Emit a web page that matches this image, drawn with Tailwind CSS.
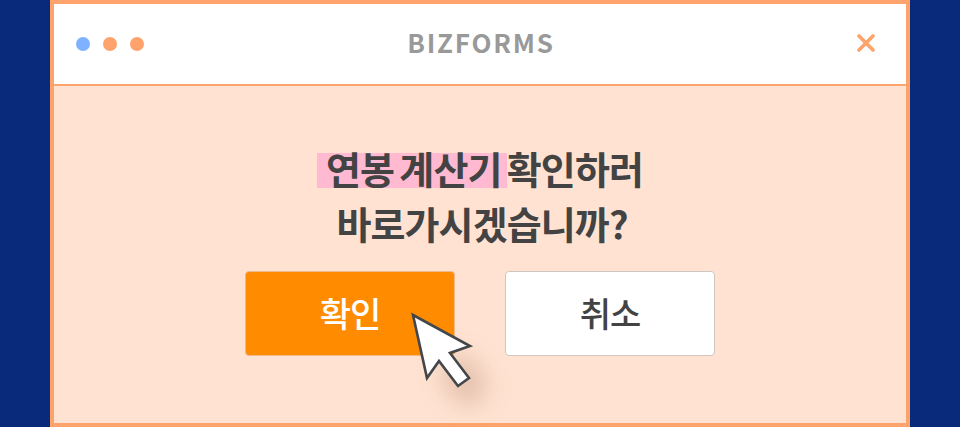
<!DOCTYPE html>
<html lang="ko">
<head>
  <meta charset="UTF-8">
  <title>BizForms</title>
  <meta name="viewport" content="width=device-width, initial-scale=1.0">
  <script src="https://cdn.jsdelivr.net/npm/@tailwindcss/browser@4"></script>
</head>
<body class="bg-[#09297a] h-[427px] overflow-hidden font-['Noto_Sans_CJK_KR','Noto_Sans',sans-serif]">
  <div class="relative mx-[50px] h-[427px] border-4 border-[#ffa36c] bg-[#ffe2d1] flex flex-col">
    <header class="h-[82px] shrink-0 bg-white border-b-2 border-[#ffa36c] flex items-center justify-between pl-[22px] pr-[31px]">
      <div class="flex gap-[13px] w-[70px]">
        <span class="w-[14px] h-[14px] rounded-full bg-[#7eb1ff]"></span>
        <span class="w-[14px] h-[14px] rounded-full bg-[#ffa36c]"></span>
        <span class="w-[14px] h-[14px] rounded-full bg-[#ffa36c]"></span>
      </div>
      <div class="flex-1 text-center pl-[11px] mb-[5px] text-[26px] leading-none font-bold tracking-[1.8px] text-[#999999]">BIZFORMS</div>
      <svg class="w-[18px] h-[18px] mb-[2px] ml-[52px]" viewBox="0 0 18 18" fill="none" stroke="#ffa36c" stroke-width="3.6" stroke-linecap="round"><path d="M2 2 16 16M16 2 2 16"/></svg>
    </header>
    <main class="flex-1 flex flex-col items-center pt-[54px]">
      <h1 class="text-[38px] leading-[55px] font-bold tracking-[-0.9px] [word-spacing:-4.5px] text-[#434343] text-center">
        <span class="bg-[linear-gradient(transparent_23%,#ffb9d0_23%,#ffb9d0_87%,transparent_87%)] pl-[9px]">연봉 계산기 </span>확인하러<br><span class="pl-[4px]">바로가시겠습니까?</span>
      </h1>
      <div class="flex gap-[50px] mt-[21px]">
        <button class="w-[210px] h-[85px] pb-[2px] rounded-[4px] bg-[#ff8c00] text-white text-[34px] font-medium tracking-[-1px] border border-[#f0b98a]">확인</button>
        <button class="w-[210px] h-[85px] pb-[2px] rounded-[4px] bg-white text-[#434343] text-[34px] font-medium tracking-[-1px] border border-[#cfc7c2]">취소</button>
      </div>
    </main>
    <div class="absolute left-[392px] top-[350px] w-[36px] h-[52px] -rotate-[35deg] rounded-full bg-[#8a5a40]/25 blur-[12px]"></div>
    <svg class="absolute left-[352px] top-[304px] w-[70px] h-[82px]" viewBox="0 0 70 82" fill="#ffffff" stroke="#434749" stroke-width="2.6" stroke-linejoin="miter"><path d="M7 7 64 38 44 45 63 70 52 78 33 53 21 70Z"/></svg>
  </div>
</body>
</html>
